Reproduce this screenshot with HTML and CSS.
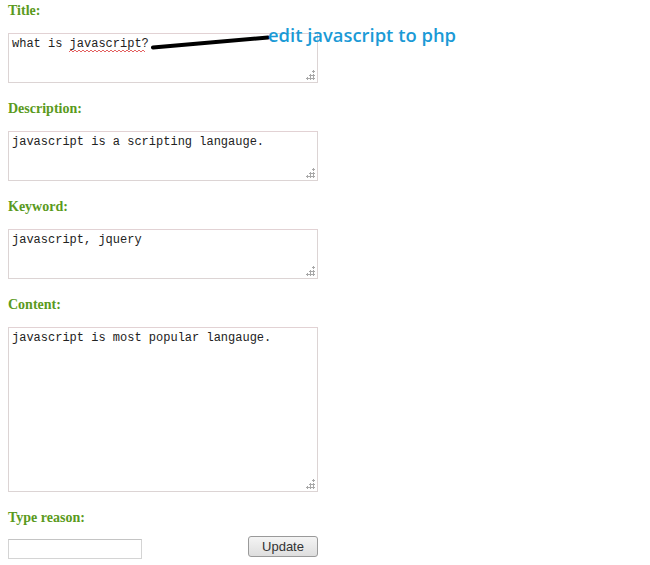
FILE: index.html
```html
<!DOCTYPE html>
<html>
<head>
<meta charset="utf-8">
<link rel="stylesheet" href="styles.css">
</head>
<body>
<form class="form">
  <div class="field">
    <label class="label">Title:</label>
    <div class="box">
      <textarea class="area" spellcheck="false">what is javascript?</textarea>
      <svg class="squiggle" width="76" height="4" viewBox="0 0 76 4"><polyline points="0,3 2,1 4,3 6,1 8,3 10,1 12,3 14,1 16,3 18,1 20,3 22,1 24,3 26,1 28,3 30,1 32,3 34,1 36,3 38,1 40,3 42,1 44,3 46,1 48,3 50,1 52,3 54,1 56,3 58,1 60,3 62,1 64,3 66,1 68,3 70,1 72,3 74,1 76,3" fill="none" stroke="#e05050" stroke-width="0.9"/></svg>
    </div>
  </div>
  <div class="field">
    <label class="label">Description:</label>
    <div class="box"><textarea class="area" spellcheck="false">javascript is a scripting langauge.</textarea></div>
  </div>
  <div class="field">
    <label class="label">Keyword:</label>
    <div class="box"><textarea class="area" spellcheck="false">javascript, jquery</textarea></div>
  </div>
  <div class="field">
    <label class="label">Content:</label>
    <div class="box"><textarea class="area tall" spellcheck="false">javascript is most popular langauge.</textarea></div>
  </div>
  <div class="field last">
    <label class="label">Type reason:</label>
    <div class="row">
      <input class="reason" type="text">
      <button class="btn" type="button">Update</button>
    </div>
  </div>
</form>
<div class="note">
  <svg class="stroke" width="130" height="20" viewBox="0 0 130 20"><path d="M3 15.5 L118 5.5" stroke="#000" stroke-width="4" stroke-linecap="round" fill="none"/></svg>
  <span class="note-text">edit javascript to php</span>
</div>
</body>
</html>
```

FILE: styles.css
```css
html, body {
  margin: 0;
  padding: 0;
  background: #fff;
}
body {
  position: relative;
  width: 650px;
  height: 565px;
  overflow: hidden;
}
.form {
  display: flex;
  flex-direction: column;
  width: 310px;
  padding: 3px 0 0 8px;
}
.field {
  display: flex;
  flex-direction: column;
  margin-bottom: 18px;
}
.label {
  font-family: "Liberation Serif", "Times New Roman", serif;
  font-weight: bold;
  font-size: 14px;
  line-height: 16px;
  color: #5a9a20;
  margin-bottom: 14px;
}
.box {
  position: relative;
  width: 310px;
}
.box::after {
  content: "";
  position: absolute;
  right: 3px;
  bottom: 3px;
  width: 10px;
  height: 10px;
  background:
    radial-gradient(circle, #a8a8a8 1px, transparent 1.3px) 7px 0 / 3px 3px no-repeat,
    radial-gradient(circle, #a8a8a8 1px, transparent 1.3px) 4px 3.5px / 3px 3px no-repeat,
    radial-gradient(circle, #a8a8a8 1px, transparent 1.3px) 7px 3.5px / 3px 3px no-repeat,
    radial-gradient(circle, #a8a8a8 1px, transparent 1.3px) 1px 7px / 3px 3px no-repeat,
    radial-gradient(circle, #a8a8a8 1px, transparent 1.3px) 4px 7px / 3px 3px no-repeat,
    radial-gradient(circle, #a8a8a8 1px, transparent 1.3px) 7px 7px / 3px 3px no-repeat;
  pointer-events: none;
}
.area {
  display: block;
  box-sizing: border-box;
  width: 310px;
  height: 50px;
  margin: 0;
  padding: 3px 3px;
  border: 1px solid #dcd4d4;
  border-top-color: #e2d2d4;
  background: #fff;
  font-family: "Liberation Mono", "Courier New", monospace;
  font-size: 12px;
  line-height: 14px;
  color: #222;
  resize: none;
  outline: none;
  overflow: hidden;
}
.area.tall {
  height: 165px;
}
.squiggle {
  position: absolute;
  left: 61px;
  top: 16px;
}
.row {
  display: flex;
  justify-content: space-between;
  align-items: flex-start;
  margin-top: -4px;
}
.reason {
  box-sizing: border-box;
  width: 134px;
  height: 20px;
  margin: 3px 0 0 0;
  padding: 0 3px;
  border: 1px solid #d4d4d4;
  border-top-color: #c4c4c4;
  background: #fff;
  outline: none;
}
.btn {
  box-sizing: border-box;
  width: 70px;
  height: 21px;
  margin: 0;
  padding: 0;
  border: 1px solid #9a9a9a;
  border-radius: 3px;
  background: linear-gradient(#f4f4f4, #dedede);
  font-family: "Liberation Sans", Arial, sans-serif;
  font-size: 13px;
  color: #333;
}
.note {
  position: absolute;
  left: 150px;
  top: 25px;
  display: flex;
  align-items: flex-start;
}
.stroke {
  display: block;
  margin-top: 7px;
}
.note-text {
  margin-left: -12px;
  margin-top: -2px;
  font-family: "Open Sans", "Noto Sans", sans-serif;
  font-weight: 600;
  font-size: 18.4px;
  line-height: 24px;
  color: #1b9ad6;
  white-space: nowrap;
}
```
